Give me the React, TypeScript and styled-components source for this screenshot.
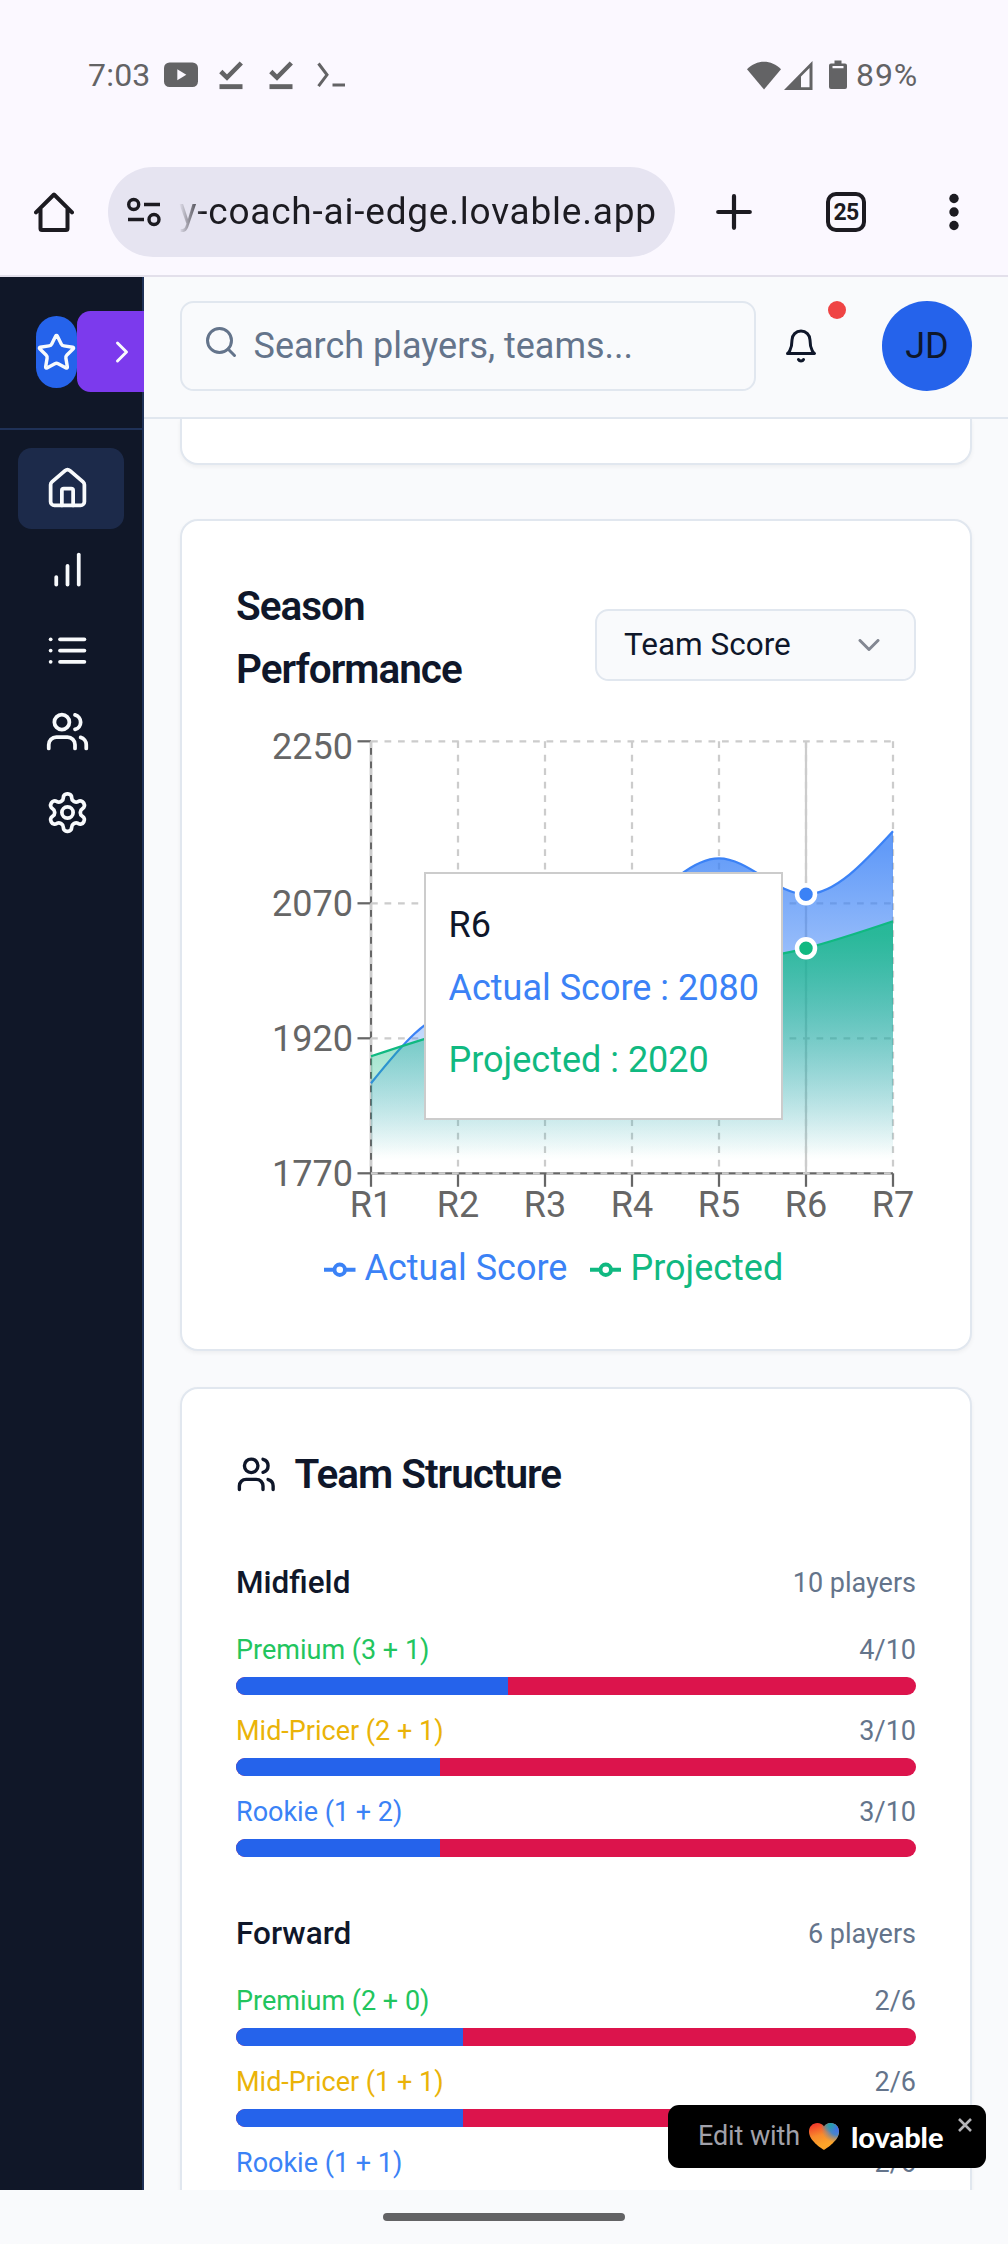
import React from "react";
import styled, { createGlobalStyle } from "styled-components";

const GlobalStyle = createGlobalStyle`
  * { box-sizing: border-box; }
  body {
    margin: 0;
    background: #f9fafc;
    font-family: Roboto, "Liberation Sans", sans-serif;
    font-size: 36px;
    color: #0f172a;
  }
`;

/* ---------- phone chrome ---------- */

const Screen = styled.div`
  width: 1008px;
  height: 2244px;
  display: flex;
  flex-direction: column;
  overflow: hidden;
  background: #f9fafc;
`;

const StatusBar = styled.div`
  height: 152px;
  flex: none;
  padding: 0 90px 2px 88px;
  display: flex;
  align-items: center;
  justify-content: space-between;
  background: #fbf8ff;
  color: #636365;
  font-size: 32px;
  line-height: 40px;
`;

const StatusGroup = styled.div`
  display: flex;
  align-items: center;
`;

const StatusIcon = styled.svg<{ $gap: number }>`
  display: block;
  flex: none;
  margin-left: ${(p) => p.$gap}px;
`;

const Clock = styled.span`
  width: 64px;
  letter-spacing: 0.2px;
`;

const Battery = styled.span`
  margin-left: 9px;
  width: 62px;
  letter-spacing: 0.9px;
`;

const BrowserBar = styled.div`
  height: 125px;
  flex: none;
  padding: 15px 30px 0 34px;
  display: flex;
  align-items: flex-start;
  background: #fbf8ff;
  border-bottom: 2px solid #e3e0eb;
`;

const BarIcon = styled.svg<{ $left?: number }>`
  display: block;
  flex: none;
  margin-top: 25px;
  margin-left: ${(p) => p.$left ?? 0}px;
`;

const Omnibox = styled.div`
  margin-left: 34px;
  width: 567px;
  height: 90px;
  flex: none;
  border-radius: 45px;
  background: #e6e4f1;
  display: flex;
  align-items: center;
  padding-left: 19px;
`;

const Url = styled.div`
  margin-left: 18px;
  font-size: 37px;
  line-height: 60px;
  letter-spacing: 0.78px;
  color: transparent;
  white-space: nowrap;
  background: linear-gradient(90deg, rgba(28, 27, 33, 0) 0, #1c1b21 24px);
  -webkit-background-clip: text;
  background-clip: text;
`;

const TabCount = styled.div`
  margin: 25px 0 0 74px;
  width: 40px;
  height: 40px;
  flex: none;
  border: 4px solid #1c1b21;
  border-radius: 10px;
  color: #1c1b21;
  font-size: 23px;
  line-height: 33px;
  font-weight: 700;
  letter-spacing: -0.6px;
  text-align: center;
`;

const GestureBar = styled.div`
  height: 54px;
  flex: none;
  padding-top: 23px;
  display: flex;
  justify-content: center;
  background: #f9fafc;
`;

const Handle = styled.div`
  width: 242px;
  height: 8px;
  border-radius: 4px;
  background: #636365;
`;

/* ---------- app shell ---------- */

const AppShell = styled.div`
  position: relative;
  height: 1913px;
  flex: none;
  display: flex;
  overflow: hidden;
`;

const Sidebar = styled.aside`
  width: 144px;
  flex: none;
  overflow: hidden;
  background: #101728;
  box-shadow: inset -2px 0 #1f3157;
  color: #f8fafc;
`;

const SidebarHead = styled.div`
  width: 180px;
  height: 153px;
  padding: 34px 0 0 36px;
  display: flex;
  border-bottom: 2px solid #1f3157;
`;

const Logo = styled.div`
  width: 41px;
  height: 72px;
  margin-top: 5px;
  flex: none;
  border-radius: 36px;
  background: #2563eb;
  display: flex;
  align-items: center;
`;

const Expand = styled.button`
  width: 90px;
  height: 81px;
  flex: none;
  border: 0;
  border-radius: 13.5px;
  padding: 0 27px;
  background: #7c3aed;
  color: #f8fafc;
  display: flex;
  align-items: center;
`;

const Nav = styled.nav`
  padding: 18px;
  display: flex;
  flex-direction: column;
`;

const NavItem = styled.a<{ $active?: boolean }>`
  width: 106px;
  height: 81px;
  padding: 18px 27px;
  border-radius: 13.5px;
  background: ${(p) => (p.$active ? "#1c2a4a" : "transparent")};
`;

const Main = styled.main`
  width: 864px;
  flex: none;
  background: #f9fafc;
`;

const TopBar = styled.header`
  height: 142px;
  padding: 24px 36px 0;
  display: flex;
  border-bottom: 2px solid #e1e7ef;
`;

const SearchBox = styled.div`
  width: 576px;
  height: 90px;
  padding: 0 21px 0 20.5px;
  display: flex;
  align-items: center;
  gap: 15px;
  border: 2px solid #e1e7ef;
  border-radius: 13.5px;
  color: #64748b;
  font-size: 36px;
  line-height: 54px;

  svg {
    margin-bottom: 9px;
  }
`;

const BellButton = styled.div`
  position: relative;
  width: 90px;
  height: 90px;
  display: flex;
  align-items: center;
  justify-content: center;
`;

const Dot = styled.span`
  position: absolute;
  top: 0;
  right: 0;
  width: 18px;
  height: 18px;
  border-radius: 50%;
  background: #ef4444;
`;

const Avatar = styled.div`
  width: 90px;
  height: 90px;
  margin-left: 36px;
  border-radius: 50%;
  background: #2563eb;
  display: flex;
  align-items: center;
  justify-content: center;
  font-size: 36px;
`;

const Content = styled.div`
  padding: 0 36px;
`;

const Card = styled.section<{ $gap: number; $height: number }>`
  height: ${(p) => p.$height}px;
  margin-top: ${(p) => p.$gap}px;
  padding: 54px;
  border: 2px solid #e1e7ef;
  border-radius: 18px;
  background: #fff;
  box-shadow: 0 2px 4.5px rgba(0, 0, 0, 0.05);
`;

const CardTail = styled.div`
  height: 46px;
  border: 2px solid #e1e7ef;
  border-top: 0;
  border-radius: 0 0 18px 18px;
  background: #fff;
  box-shadow: 0 2px 4.5px rgba(0, 0, 0, 0.05);
`;

const CardTitle = styled.h3`
  margin: 0;
  font-size: 40.5px;
  line-height: 63px;
  font-weight: 600;
  letter-spacing: -1.01px;
`;

/* ---------- season chart ---------- */

const ChartHead = styled.div`
  height: 126px;
  margin-bottom: 31px;
  display: flex;
  align-items: center;
  justify-content: space-between;

  h3 {
    width: 300px;
  }
`;

const Select = styled.div`
  width: 321px;
  height: 72px;
  margin-top: 14px;
  padding: 0 27px 1px;
  display: flex;
  align-items: center;
  justify-content: space-between;
  border: 2px solid #e1e7ef;
  border-radius: 13.5px;
  background: #f9fafc;
  font-size: 31.5px;

  svg {
    opacity: 0.5;
  }
`;

const ChartArea = styled.div`
  position: relative;
  height: 563px;
`;

const Plot = styled.svg`
  display: block;
  overflow: visible;
`;

const Legend = styled.div`
  padding-left: 88px;
  display: flex;
  gap: 22.5px;
`;

const LegendItem = styled.div<{ $color: string }>`
  display: flex;
  align-items: center;
  gap: 9px;
  line-height: 54px;
  color: ${(p) => p.$color};

  svg {
    margin-top: 4px;
  }
`;

const Tooltip = styled.div`
  position: absolute;
  left: 188px;
  top: 140px;
  width: 359px;
  height: 248px;
  padding: 23.5px 22.5px 0;
  border: 2px solid #ccc;
  background: #fff;
  white-space: nowrap;
  line-height: 54px;
`;

const TooltipRow = styled.div<{ $color: string }>`
  padding: 9px 0;
  color: ${(p) => p.$color};
`;

/* ---------- team structure ---------- */

const TeamTitle = styled.div`
  display: flex;
  align-items: center;
  gap: 18px;
  margin-bottom: 54px;
`;

const Group = styled.div`
  margin-bottom: 54px;
`;

const GroupHead = styled.div`
  display: flex;
  align-items: center;
  justify-content: space-between;
  height: 45px;
  margin-bottom: 27px;
`;

const GroupName = styled.span`
  font-size: 31.5px;
  font-weight: 500;
`;

const Muted = styled.span`
  font-size: 27px;
  color: #64748b;
`;

const Tier = styled.div`
  margin-bottom: 18px;
`;

const TierRow = styled.div<{ $color: string }>`
  display: flex;
  justify-content: space-between;
  margin-bottom: 9px;
  font-size: 27px;
  line-height: 36px;
  color: ${(p) => p.$color};
`;

const Track = styled.div`
  height: 18px;
  border-radius: 9px;
  overflow: hidden;
  background: #dc144c;
`;

const Fill = styled.div`
  height: 18px;
  background: #2563eb;
`;

/* ---------- badge ---------- */

const Badge = styled.div`
  position: absolute;
  left: 668px;
  top: 1828px;
  width: 318px;
  height: 63px;
  padding-left: 30px;
  border-radius: 11px;
  background: #000;
  display: flex;
  align-items: center;
`;

const BadgeText = styled.span`
  width: 111px;
  margin-top: -1px;
  font-size: 27px;
  color: #a1a1aa;
  letter-spacing: -0.1px;
`;

const Wordmark = styled.span`
  margin-left: 12px;
  width: 94px;
  font-family: Lato, Roboto, sans-serif;
  font-weight: 900;
  font-size: 29px;
  letter-spacing: -0.1px;
  color: #fff;
`;

const Close = styled.svg`
  margin: -24px 0 0 13px;
`;

/* ---------- icons ---------- */

const ICONS = {
  star: [
    "M11.525 2.295a.53.53 0 0 1 .95 0l2.31 4.679a2.123 2.123 0 0 0 1.595 1.16l5.166.756a.53.53 0 0 1 .294.904l-3.736 3.638a2.123 2.123 0 0 0-.611 1.878l.882 5.14a.53.53 0 0 1-.771.56l-4.618-2.428a2.122 2.122 0 0 0-1.973 0L6.396 21.01a.53.53 0 0 1-.77-.56l.881-5.139a2.122 2.122 0 0 0-.611-1.879L2.16 9.795a.53.53 0 0 1 .294-.906l5.165-.755a2.122 2.122 0 0 0 1.597-1.16z",
  ],
  chevronRight: ["m9 18 6-6-6-6"],
  chevronDown: ["m6 9 6 6 6-6"],
  house: [
    "M15 21v-8a1 1 0 0 0-1-1h-4a1 1 0 0 0-1 1v8",
    "M3 10a2 2 0 0 1 .709-1.528l7-5.999a2 2 0 0 1 2.582 0l7 5.999A2 2 0 0 1 21 10v9a2 2 0 0 1-2 2H5a2 2 0 0 1-2-2z",
  ],
  bars: ["M12 20V10", "M18 20V4", "M6 20v-4"],
  list: ["M8 6h13", "M8 12h13", "M8 18h13", "M3 6h.01", "M3 12h.01", "M3 18h.01"],
  users: [
    "M16 21v-2a4 4 0 0 0-4-4H6a4 4 0 0 0-4 4v2",
    "M5 7a4 4 0 1 0 8 0a4 4 0 1 0-8 0",
    "M22 21v-2a4 4 0 0 0-3-3.87",
    "M16 3.13a4 4 0 0 1 0 7.75",
  ],
  settings: [
    "M12.22 2h-.44a2 2 0 0 0-2 2v.18a2 2 0 0 1-1 1.73l-.43.25a2 2 0 0 1-2 0l-.15-.08a2 2 0 0 0-2.73.73l-.22.38a2 2 0 0 0 .73 2.73l.15.1a2 2 0 0 1 1 1.72v.51a2 2 0 0 1-1 1.74l-.15.09a2 2 0 0 0-.73 2.73l.22.38a2 2 0 0 0 2.73.73l.15-.08a2 2 0 0 1 2 0l.43.25a2 2 0 0 1 1 1.73V20a2 2 0 0 0 2 2h.44a2 2 0 0 0 2-2v-.18a2 2 0 0 1 1-1.73l.43-.25a2 2 0 0 1 2 0l.15.08a2 2 0 0 0 2.73-.73l.22-.39a2 2 0 0 0-.73-2.73l-.15-.08a2 2 0 0 1-1-1.74v-.5a2 2 0 0 1 1-1.74l.15-.09a2 2 0 0 0 .73-2.73l-.22-.38a2 2 0 0 0-2.73-.73l-.15.08a2 2 0 0 1-2 0l-.43-.25a2 2 0 0 1-1-1.73V4a2 2 0 0 0-2-2z",
    "M9 12a3 3 0 1 0 6 0a3 3 0 1 0-6 0",
  ],
  search: ["M3 11a8 8 0 1 0 16 0a8 8 0 1 0-16 0", "m21 21-4.3-4.3"],
  bell: ["M6 8a6 6 0 0 1 12 0c0 7 3 9 3 9H3s3-2 3-9", "M10.3 21a1.94 1.94 0 0 0 3.4 0"],
};

const LineSvg = styled.svg`
  display: block;
  flex: none;
  fill: none;
  stroke: currentColor;
  stroke-width: 2;
  stroke-linecap: round;
  stroke-linejoin: round;
`;

function Icon({ name, size }: { name: keyof typeof ICONS; size: number }) {
  return (
    <LineSvg width={size} height={size} viewBox="0 0 24 24">
      {ICONS[name].map((d) => (
        <path key={d} d={d} />
      ))}
    </LineSvg>
  );
}

const DownloadDone = ({ gap }: { gap: number }) => (
  <StatusIcon $gap={gap} width="24" height="30" viewBox="0 0 24 30">
    <path d="M1.8 11.5 8 17.6 22.3 3" fill="none" stroke="#636365" strokeWidth="4.6" />
    <path d="M0.5 24.2h23v4.9h-23z" fill="#636365" />
  </StatusIcon>
);

/* ---------- chart geometry ---------- */

const X0 = 135;
const STEP = 87;
const BASE = 441.3;
const TOP = 9.3;
const yOf = (v: number) => BASE - (v - 1770) * 0.9;
const xOf = (i: number) => X0 + i * STEP;

const ACTUAL = [1870, 1950, 1920, 2050, 2120, 2080, 2150];
const PROJECTED = [1900, 1930, 1950, 1970, 2000, 2020, 2050];

/* Monotone cubic interpolation through evenly spaced points. */
function monotone(values: number[]) {
  const y = values.map(yOf);
  const n = y.length;
  const d = y.slice(1).map((v, i) => v - y[i]);
  const m = y.map((_, i) => {
    if (i === 0 || i === n - 1) return 0;
    const a = d[i - 1];
    const b = d[i];
    if (a * b <= 0) return 0;
    return Math.sign(a) * 2 * Math.min(Math.abs(a), Math.abs(b), Math.abs(a + b) / 4);
  });
  m[0] = (3 * d[0] - m[1]) / 2;
  m[n - 1] = (3 * d[n - 2] - m[n - 2]) / 2;
  let path = `M${xOf(0)},${y[0]}`;
  for (let i = 0; i < n - 1; i++) {
    path += `C${xOf(i) + STEP / 3},${y[i] + m[i] / 3} ${xOf(i + 1) - STEP / 3},${y[i + 1] - m[i + 1] / 3} ${xOf(i + 1)},${y[i + 1]}`;
  }
  return path;
}

const BLUE = "#3b82f6";
const GREEN = "#10b981";

function SeasonChart() {
  const right = xOf(6);
  const ticks = [0, 1, 2, 3, 4, 5, 6];
  const series = [
    { id: "actual", color: BLUE, values: ACTUAL },
    { id: "projected", color: GREEN, values: PROJECTED },
  ];
  return (
    <ChartArea>
      <Plot width="680" height="509">
        <defs>
          {series.map((s) => (
            <linearGradient key={s.id} id={s.id} x1="0" y1="0" x2="0" y2="1">
              <stop offset="5%" stopColor={s.color} stopOpacity={0.8} />
              <stop offset="95%" stopColor={s.color} stopOpacity={0} />
            </linearGradient>
          ))}
        </defs>
        <g stroke="#666" strokeWidth="2.25">
          <path d={`M${X0},${TOP}V${BASE}H${right}`} fill="none" />
          {ticks.map((i) => (
            <path key={i} d={`M${xOf(i)},${BASE}v13.5`} />
          ))}
          {[2250, 2070, 1920, 1770].map((v) => (
            <path key={v} d={`M${X0 - 13.5},${yOf(v)}H${X0}`} />
          ))}
        </g>
        <g stroke="#ccc" strokeWidth="2.25" strokeDasharray="6.75 6.75">
          {[2250, 2070, 1920, 1770].map((v) => (
            <path key={v} d={`M${X0},${yOf(v)}H${right}`} />
          ))}
          {ticks.map((i) => (
            <path key={i} d={`M${xOf(i)},${TOP}V${BASE}`} />
          ))}
        </g>
        <path d={`M${xOf(5)},${TOP}V${BASE}`} stroke="#ccc" strokeWidth="2.25" />
        {series.map((s) => (
          <g key={s.id}>
            <path d={`${monotone(s.values)}V${BASE}H${X0}Z`} fill={`url(#${s.id})`} />
            <path d={monotone(s.values)} fill="none" stroke={s.color} strokeWidth="2.25" />
          </g>
        ))}
        {series.map((s) => (
          <circle key={s.id} cx={xOf(5)} cy={yOf(s.values[5])} r="9" fill={s.color} stroke="#fff" strokeWidth="4.5" />
        ))}
        <g fill="#666" fontSize="36" textAnchor="end">
          <text x="117" y="27">2250</text>
          <text x="117" y="184">2070</text>
          <text x="117" y="319">1920</text>
          <text x="117" y="454">1770</text>
        </g>
        <g fill="#666" fontSize="36" textAnchor="middle">
          {ticks.map((i) => (
            <text key={i} x={xOf(i)} y="485">{`R${i + 1}`}</text>
          ))}
        </g>
      </Plot>
      <Legend>
        {[
          { label: "Actual Score", color: BLUE },
          { label: "Projected", color: GREEN },
        ].map((item) => (
          <LegendItem key={item.label} $color={item.color}>
            <svg width="31.5" height="31.5" viewBox="0 0 32 32">
              <path
                d="M0,16h10.667A5.333,5.333,0,1,1,21.333,16H32M21.333,16A5.333,5.333,0,1,1,10.667,16"
                fill="none"
                stroke={item.color}
                strokeWidth="4"
              />
            </svg>
            {item.label}
          </LegendItem>
        ))}
      </Legend>
      <Tooltip>
        <div>R6</div>
        <TooltipRow $color={BLUE}>Actual Score : 2080</TooltipRow>
        <TooltipRow $color={GREEN}>Projected : 2020</TooltipRow>
      </Tooltip>
    </ChartArea>
  );
}

const TIER_COLORS = ["#22c55e", "#eab308", "#3b82f6"];

const GROUPS = [
  {
    name: "Midfield",
    total: 10,
    tiers: [
      { label: "Premium (3 + 1)", count: 4 },
      { label: "Mid-Pricer (2 + 1)", count: 3 },
      { label: "Rookie (1 + 2)", count: 3 },
    ],
  },
  {
    name: "Forward",
    total: 6,
    tiers: [
      { label: "Premium (2 + 0)", count: 2 },
      { label: "Mid-Pricer (1 + 1)", count: 2 },
      { label: "Rookie (1 + 1)", count: 2 },
    ],
  },
];

const NAV: (keyof typeof ICONS)[] = ["house", "bars", "list", "users", "settings"];

export default function App() {
  return (
    <Screen>
      <GlobalStyle />
      <StatusBar>
        <StatusGroup>
          <Clock>7:03</Clock>
          <StatusIcon $gap={12} width="34" height="26" viewBox="0 0 34 26">
            <rect y="0.5" width="34" height="24.5" rx="5.5" fill="#636365" />
            <path d="M13.3 7.3v11l9-5.5z" fill="#fbf8ff" />
          </StatusIcon>
          <DownloadDone gap={21} />
          <DownloadDone gap={26} />
          <StatusIcon $gap={24} width="29" height="26" viewBox="0 0 29 26" fill="none" stroke="#636365" strokeWidth="3">
            <path d="M1.5 1.5 10 12.8 1.5 24.2" />
            <path d="M15.5 23h12.5" />
          </StatusIcon>
        </StatusGroup>
        <StatusGroup>
          <StatusIcon $gap={0} width="34" height="29" viewBox="0 0 34 29">
            <path d="M0 8.3C9.5-1.8 24.5-1.8 34 8.3L17 28.5Z" fill="#636365" />
          </StatusIcon>
          <StatusIcon $gap={3} width="29" height="29" viewBox="0 0 29 29">
            <path d="M0 29 28.5 0V29ZM17 15.5V26.2H25.5V7Z" fill="#636365" fillRule="evenodd" />
          </StatusIcon>
          <StatusIcon $gap={16} width="18" height="30" viewBox="0 0 18 30">
            <path
              d="M5.5 0.5h7v3h3.5q2 0 2 2v21.5q0 2-2 2h-14q-2 0-2-2v-21.5q0-2 2-2h3.5zM3.5 6v2.3h11v-2.3z"
              fill="#636365"
              fillRule="evenodd"
            />
          </StatusIcon>
          <Battery>89%</Battery>
        </StatusGroup>
      </StatusBar>
      <BrowserBar>
        <BarIcon
          width="40"
          height="40"
          viewBox="0 0 40 40"
          fill="none"
          stroke="#1c1b21"
          strokeWidth="4"
          strokeLinejoin="round"
          strokeLinecap="round"
        >
          <path d="M2 20.3 20 2.5 38 20.3M6.5 17V36.5Q6.5 38 8 38H32Q33.5 38 33.5 36.5V17" />
        </BarIcon>
        <Omnibox>
          <svg width="34" height="30" viewBox="0 0 34 30" fill="none" stroke="#1c1b21" strokeWidth="3.4">
            <circle cx="6.7" cy="7.5" r="5" />
            <path d="M17 7.5h16M1 22.5h16" />
            <circle cx="27" cy="22.5" r="5" />
          </svg>
          <Url>y-coach-ai-edge.lovable.app</Url>
        </Omnibox>
        <BarIcon $left={41} width="36" height="40" viewBox="0 0 36 40" stroke="#1c1b21" strokeWidth="4.2" strokeLinecap="round">
          <path d="M18 4.2v31.6M2.2 20h31.6" />
        </BarIcon>
        <TabCount>25</TabCount>
        <BarIcon $left={83} width="10" height="40" viewBox="0 0 10 40" fill="#1c1b21">
          <circle cx="5" cy="6.5" r="4.7" />
          <circle cx="5" cy="20" r="4.7" />
          <circle cx="5" cy="33.5" r="4.7" />
        </BarIcon>
      </BrowserBar>

      <AppShell>
        <Sidebar>
          <SidebarHead>
            <Logo>
              <Icon name="star" size={41} />
            </Logo>
            <Expand>
              <Icon name="chevronRight" size={36} />
            </Expand>
          </SidebarHead>
          <Nav>
            {NAV.map((name, i) => (
              <NavItem key={name} $active={i === 0}>
                <Icon name={name} size={45} />
              </NavItem>
            ))}
          </Nav>
        </Sidebar>
        <Main>
          <TopBar>
            <SearchBox>
              <Icon name="search" size={36} />
              Search players, teams...
            </SearchBox>
            <BellButton>
              <Icon name="bell" size={36} />
              <Dot />
            </BellButton>
            <Avatar>JD</Avatar>
          </TopBar>
          <Content>
            <CardTail />
            <Card $gap={54} $height={832}>
              <ChartHead>
                <CardTitle>Season Performance</CardTitle>
                <Select>
                  Team Score
                  <Icon name="chevronDown" size={36} />
                </Select>
              </ChartHead>
              <SeasonChart />
            </Card>
            <Card $gap={36} $height={1000}>
              <TeamTitle>
                <Icon name="users" size={40.5} />
                <CardTitle>Team Structure</CardTitle>
              </TeamTitle>
              {GROUPS.map((g) => (
                <Group key={g.name}>
                  <GroupHead>
                    <GroupName>{g.name}</GroupName>
                    <Muted>{g.total} players</Muted>
                  </GroupHead>
                  {g.tiers.map((t, i) => (
                    <Tier key={t.label}>
                      <TierRow $color={TIER_COLORS[i]}>
                        <span>{t.label}</span>
                        <Muted>{`${t.count}/${g.total}`}</Muted>
                      </TierRow>
                      <Track>
                        <Fill style={{ width: `${(t.count / g.total) * 100}%` }} />
                      </Track>
                    </Tier>
                  ))}
                </Group>
              ))}
            </Card>
          </Content>
        </Main>
        <Badge>
          <BadgeText>Edit with</BadgeText>
          <svg width="30" height="27" viewBox="0 0 30 27">
            <defs>
              <linearGradient id="heartBase" x1="0.2" y1="0" x2="0.55" y2="1">
                <stop offset="0" stopColor="#f0352b" />
                <stop offset="0.45" stopColor="#f98a2c" />
                <stop offset="0.8" stopColor="#fda42a" />
              </linearGradient>
              <radialGradient id="heartCool" cx="0.95" cy="0.2" r="0.55">
                <stop offset="0" stopColor="#3f6df0" />
                <stop offset="0.45" stopColor="#4a86c8" />
                <stop offset="1" stopColor="#8a8a90" stopOpacity="0" />
              </radialGradient>
              <radialGradient id="heartTeal" cx="0.7" cy="0.05" r="0.3">
                <stop offset="0" stopColor="#1fa0a8" />
                <stop offset="1" stopColor="#1fa0a8" stopOpacity="0" />
              </radialGradient>
            </defs>
            {["heartBase", "heartCool", "heartTeal"].map((id) => (
              <path
                key={id}
                d="M15 27C12 25 0 17.5 0 8.5C0 3.5 3.8 0 8.3 0C11.2 0 13.7 1.5 15 3.5C16.3 1.5 18.8 0 21.7 0C26.2 0 30 3.5 30 8.5C30 17.5 18 25 15 27Z"
                fill={`url(#${id})`}
              />
            ))}
          </svg>
          <Wordmark>lovable</Wordmark>
          <Close width="14" height="14" viewBox="0 0 14 14" stroke="#b4b4b8" strokeWidth="2.6">
            <path d="M1 1l12 12M13 1 1 13" />
          </Close>
        </Badge>
      </AppShell>
      <GestureBar>
        <Handle />
      </GestureBar>
    </Screen>
  );
}
